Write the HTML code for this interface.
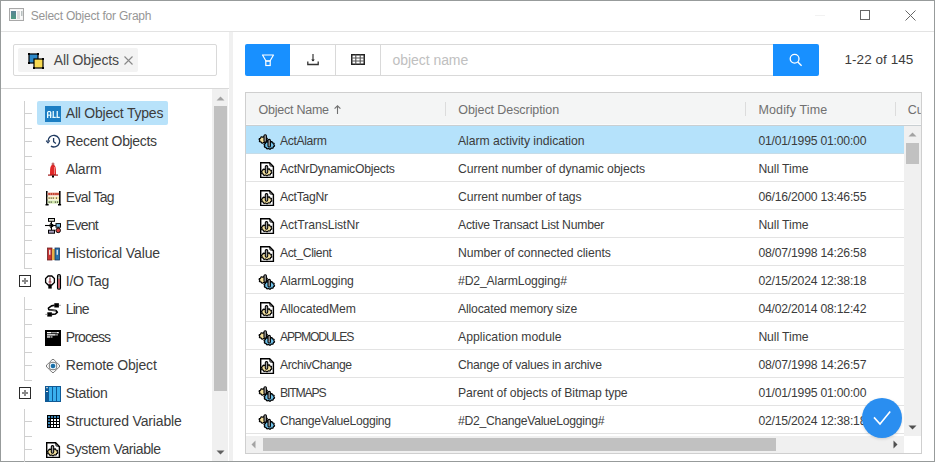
<!DOCTYPE html><html><head><meta charset="utf-8"><style>
*{margin:0;padding:0;box-sizing:border-box}
html,body{width:935px;height:462px;overflow:hidden;background:#fff;font-family:"Liberation Sans",sans-serif}
.t{position:absolute;white-space:nowrap}
.b{position:absolute}
.ic{position:absolute;overflow:visible}
</style></head><body>
<div class="b" style="left:0;top:0;width:935px;height:462px;border:1px solid #979b9b"></div>
<div class="b" style="left:1px;top:31px;width:933px;height:1px;background:#e3e3e3"></div>
<svg class="ic" style="left:9px;top:8px" width="15" height="13" viewBox="0 0 15 13">
<rect x="0.5" y="0.5" width="14" height="12" fill="#f4f4f4" stroke="#a8a8a8"/>
<rect x="2" y="2" width="11" height="9" fill="#fafafa"/>
<defs><linearGradient id="wg" x1="0" y1="0" x2="0" y2="1"><stop offset="0" stop-color="#5a8296"/><stop offset="1" stop-color="#4e9a80"/></linearGradient></defs>
<rect x="2" y="3" width="5" height="8" fill="url(#wg)"/>
<rect x="8" y="3" width="3" height="8" fill="#dcdcdc"/>
<rect x="12" y="3" width="1.5" height="5" fill="#b8c0c0"/>
</svg>
<div class="t" style="left:30.7px;top:9.34px;font-size:12px;line-height:15px;color:#969696;letter-spacing:-0.209px;">Select Object for Graph</div>
<div class="b" style="left:815px;top:15px;width:10px;height:1px;background:#f2f2f2"></div>
<div class="b" style="left:860px;top:10px;width:10px;height:10px;border:1px solid #666"></div>
<svg class="ic" style="left:905px;top:10px" width="11" height="11" viewBox="0 0 11 11"><path d="M0.5 0.5 L10.5 10.5 M10.5 0.5 L0.5 10.5" stroke="#666" stroke-width="1"/></svg>
<div class="b" style="left:13px;top:44px;width:204px;height:32px;border:1px solid #d9d9d9;border-radius:2px"></div>
<div class="b" style="left:18px;top:48px;width:120px;height:24px;background:#f3f3f3;border-radius:2px"></div>
<svg class="ic" style="left:28px;top:53px" width="16" height="16" viewBox="0 0 16 16">
<rect x="1" y="1" width="9" height="9" fill="#2c88c8" stroke="#000" stroke-width="1.2"/>
<rect x="6" y="6" width="9" height="9" fill="#f8da52" stroke="#000" stroke-width="1.2"/>
<rect x="0" y="0" width="2" height="2" fill="#000"/><rect x="9" y="0" width="2" height="2" fill="#000"/>
<rect x="0" y="9" width="2" height="2" fill="#000"/><rect x="14" y="5" width="2" height="2" fill="#000"/>
<rect x="5" y="14" width="2" height="2" fill="#000"/><rect x="14" y="14" width="2" height="2" fill="#000"/>
</svg>
<div class="t" style="left:53.8px;top:51.35px;font-size:14px;line-height:18px;color:#484848;letter-spacing:-0.170px;">All Objects</div>
<svg class="ic" style="left:124px;top:56px" width="9" height="9" viewBox="0 0 9 9"><path d="M0.5 0.5 L8.5 8.5 M8.5 0.5 L0.5 8.5" stroke="#888" stroke-width="1.1"/></svg>
<div class="b" style="left:1px;top:88px;width:228px;height:1px;background:#d9d9d9"></div>
<div class="b" style="left:229px;top:32px;width:4px;height:429px;background:#f0f0f0"></div>
<div class="b" style="left:37px;top:101px;width:131px;height:24px;background:#b8e2fa;border-radius:2px"></div>
<div class="b" style="left:24px;top:101px;width:1px;height:28px;background:#d0d0d0"></div>
<div class="b" style="left:24px;top:113px;width:8px;height:1px;background:#d0d0d0"></div>
<div class="b" style="left:24px;top:128px;width:8px;height:1px;background:#d0d0d0"></div>
<div class="t" style="left:65.8px;top:103.95px;font-size:14px;line-height:18px;color:#3c3c3c;letter-spacing:-0.220px;">All Object Types</div>
<div class="b" style="left:24px;top:129px;width:1px;height:28px;background:#d0d0d0"></div>
<div class="b" style="left:24px;top:141px;width:8px;height:1px;background:#d0d0d0"></div>
<div class="b" style="left:24px;top:156px;width:8px;height:1px;background:#d0d0d0"></div>
<div class="t" style="left:65.8px;top:131.95px;font-size:14px;line-height:18px;color:#3c3c3c;letter-spacing:-0.346px;">Recent Objects</div>
<div class="b" style="left:24px;top:157px;width:1px;height:28px;background:#d0d0d0"></div>
<div class="b" style="left:24px;top:169px;width:8px;height:1px;background:#d0d0d0"></div>
<div class="b" style="left:24px;top:184px;width:8px;height:1px;background:#d0d0d0"></div>
<div class="t" style="left:65.8px;top:159.95px;font-size:14px;line-height:18px;color:#3c3c3c;letter-spacing:-0.200px;">Alarm</div>
<div class="b" style="left:24px;top:185px;width:1px;height:28px;background:#d0d0d0"></div>
<div class="b" style="left:24px;top:197px;width:8px;height:1px;background:#d0d0d0"></div>
<div class="b" style="left:24px;top:212px;width:8px;height:1px;background:#d0d0d0"></div>
<div class="t" style="left:65.8px;top:187.95px;font-size:14px;line-height:18px;color:#3c3c3c;letter-spacing:-0.657px;">Eval Tag</div>
<div class="b" style="left:24px;top:213px;width:1px;height:28px;background:#d0d0d0"></div>
<div class="b" style="left:24px;top:225px;width:8px;height:1px;background:#d0d0d0"></div>
<div class="b" style="left:24px;top:240px;width:8px;height:1px;background:#d0d0d0"></div>
<div class="t" style="left:65.8px;top:215.95px;font-size:14px;line-height:18px;color:#3c3c3c;letter-spacing:-0.750px;">Event</div>
<div class="b" style="left:24px;top:241px;width:1px;height:28px;background:#d0d0d0"></div>
<div class="b" style="left:24px;top:253px;width:8px;height:1px;background:#d0d0d0"></div>
<div class="b" style="left:24px;top:268px;width:8px;height:1px;background:#d0d0d0"></div>
<div class="t" style="left:65.8px;top:243.95px;font-size:14px;line-height:18px;color:#3c3c3c;letter-spacing:-0.127px;">Historical Value</div>
<div class="b" style="left:19px;top:275px;width:12px;height:12px;border:1.3px solid #2a2a2a;background:#fff"></div>
<div class="b" style="left:22px;top:280px;width:6px;height:2px;background:#8a8a8a"></div>
<div class="b" style="left:24px;top:278px;width:2px;height:6px;background:#8a8a8a"></div>
<div class="t" style="left:65.8px;top:271.95px;font-size:14px;line-height:18px;color:#3c3c3c;letter-spacing:-0.233px;">I/O Tag</div>
<div class="b" style="left:24px;top:297px;width:1px;height:28px;background:#d0d0d0"></div>
<div class="b" style="left:24px;top:309px;width:8px;height:1px;background:#d0d0d0"></div>
<div class="b" style="left:24px;top:324px;width:8px;height:1px;background:#d0d0d0"></div>
<div class="t" style="left:65.8px;top:299.95px;font-size:14px;line-height:18px;color:#3c3c3c;letter-spacing:-0.933px;">Line</div>
<div class="b" style="left:24px;top:325px;width:1px;height:28px;background:#d0d0d0"></div>
<div class="b" style="left:24px;top:337px;width:8px;height:1px;background:#d0d0d0"></div>
<div class="b" style="left:24px;top:352px;width:8px;height:1px;background:#d0d0d0"></div>
<div class="t" style="left:65.8px;top:327.95px;font-size:14px;line-height:18px;color:#3c3c3c;letter-spacing:-0.883px;">Process</div>
<div class="b" style="left:24px;top:353px;width:1px;height:28px;background:#d0d0d0"></div>
<div class="b" style="left:24px;top:365px;width:8px;height:1px;background:#d0d0d0"></div>
<div class="b" style="left:24px;top:380px;width:8px;height:1px;background:#d0d0d0"></div>
<div class="t" style="left:65.8px;top:355.95px;font-size:14px;line-height:18px;color:#3c3c3c;letter-spacing:-0.200px;">Remote Object</div>
<div class="b" style="left:19px;top:387px;width:12px;height:12px;border:1.3px solid #2a2a2a;background:#fff"></div>
<div class="b" style="left:22px;top:392px;width:6px;height:2px;background:#8a8a8a"></div>
<div class="b" style="left:24px;top:390px;width:2px;height:6px;background:#8a8a8a"></div>
<div class="t" style="left:65.8px;top:383.95px;font-size:14px;line-height:18px;color:#3c3c3c;letter-spacing:-0.267px;">Station</div>
<div class="b" style="left:24px;top:409px;width:1px;height:28px;background:#d0d0d0"></div>
<div class="b" style="left:24px;top:421px;width:8px;height:1px;background:#d0d0d0"></div>
<div class="b" style="left:24px;top:436px;width:8px;height:1px;background:#d0d0d0"></div>
<div class="t" style="left:65.8px;top:411.95px;font-size:14px;line-height:18px;color:#3c3c3c;letter-spacing:-0.156px;">Structured Variable</div>
<div class="b" style="left:24px;top:437px;width:1px;height:28px;background:#d0d0d0"></div>
<div class="b" style="left:24px;top:449px;width:8px;height:1px;background:#d0d0d0"></div>
<div class="b" style="left:24px;top:464px;width:8px;height:1px;background:#d0d0d0"></div>
<div class="t" style="left:65.8px;top:439.95px;font-size:14px;line-height:18px;color:#3c3c3c;letter-spacing:-0.400px;">System Variable</div>
<svg class="ic" style="left:45px;top:106px" width="16" height="16" viewBox="0 0 16 16"><rect x="0" y="0" width="16" height="16" fill="#1c7ec3"/><g fill="#e8fbff"><rect x="2" y="6" width="1.3" height="6"/><rect x="5" y="6" width="1.3" height="6"/><rect x="2.6" y="5" width="3.1" height="1.2"/><rect x="2" y="8.6" width="4.3" height="1.1"/><rect x="7.6" y="5" width="1.3" height="7"/><rect x="7.6" y="10.8" width="3.2" height="1.2"/><rect x="11.6" y="5" width="1.3" height="7"/><rect x="11.6" y="10.8" width="3.2" height="1.2"/></g></svg>
<svg class="ic" style="left:45px;top:134px" width="16" height="16" viewBox="0 0 16 16"><path d="M3 7.2 A5.8 5.8 0 1 1 5.9 12.2" fill="none" stroke="#1f3a60" stroke-width="1.4"/><path d="M1.2 6.6 L3 8.8 L4.8 6.5" fill="none" stroke="#1f3a60" stroke-width="1.2"/><path d="M8.6 4 V7.8 L10.9 9.6" fill="none" stroke="#1f3a60" stroke-width="1.3"/></svg>
<svg class="ic" style="left:45px;top:162px" width="16" height="16" viewBox="0 0 16 16"><path d="M8 2.5 C5 3.5 5 6 5 13 H11 C11 6 11 3.5 8 2.5Z" fill="#e02828"/><rect x="3" y="12.5" width="10" height="1.2" fill="#a01818"/><rect x="7" y="13.5" width="2" height="2" fill="#000"/><circle cx="8" cy="2" r="1" fill="none" stroke="#a02020" stroke-width="0.8"/><path d="M9.5 5 V12" stroke="#fff" stroke-width="0.6" opacity="0.7"/></svg>
<svg class="ic" style="left:45px;top:190px" width="16" height="16" viewBox="0 0 16 16"><g transform="translate(0.5,1) scale(1.04,1)"><rect x="0.5" y="0" width="1.5" height="14" fill="#000"/><rect x="13" y="0" width="1.5" height="14" fill="#000"/><rect x="0" y="13" width="3" height="1.5" fill="#000"/><rect x="12" y="13" width="3" height="1.5" fill="#000"/><rect x="2" y="1.5" width="11" height="3" fill="#e9a898"/><rect x="2" y="5.5" width="11" height="3" fill="#f8e6a8"/><rect x="2" y="9.5" width="11" height="3" fill="#cfe6a8"/><g fill="#c03a28"><circle cx="3.5" cy="3" r="1"/><circle cx="5.7" cy="3" r="1"/><circle cx="7.9" cy="3" r="1"/><circle cx="10.1" cy="3" r="1"/><circle cx="12" cy="3" r="0.9"/></g><g fill="#333"><rect x="3" y="6.5" width="1" height="1.2"/><rect x="5" y="6.5" width="1" height="1.2"/><rect x="7" y="6.5" width="1" height="1.2"/><rect x="10" y="6.5" width="1" height="1.2"/><rect x="3" y="10.5" width="1" height="1.2"/><rect x="5" y="10.5" width="1" height="1.2"/><rect x="9" y="10.5" width="1" height="1.2"/><rect x="11" y="10.5" width="1" height="1.2"/></g></g></svg>
<svg class="ic" style="left:45px;top:218px" width="16" height="16" viewBox="0 0 16 16"><path d="M6.5 3.3 V12.2" stroke="#000" stroke-width="1"/><path d="M6.5 4.2 Q3.2 7.5 6.5 10.8" fill="none" stroke="#000" stroke-width="0.9"/><path d="M0 7.5 H11" stroke="#000" stroke-width="1.1"/><circle cx="6.9" cy="7.5" r="1.7" fill="#000"/><rect x="3.5" y="0.5" width="6" height="2.8" fill="#d8d8d0" stroke="#000" stroke-width="1"/><rect x="3.5" y="12.2" width="6" height="3" fill="#a8a0c0" stroke="#000" stroke-width="1"/><rect x="11" y="5.6" width="4.5" height="3.6" fill="#80c0e8" stroke="#000" stroke-width="1"/><path d="M13.2 9.2 V10" stroke="#000" stroke-width="0.8"/><circle cx="13.2" cy="12.4" r="2.3" fill="#d04040" stroke="#000" stroke-width="0.9"/></svg>
<svg class="ic" style="left:45px;top:246px" width="16" height="16" viewBox="0 0 16 16"><g transform="translate(-1.5,1)"><rect x="4" y="1" width="4.5" height="12" fill="#c83434" stroke="#6a2020" stroke-width="0.8"/><rect x="8.5" y="2" width="3" height="11" fill="#e8b048"/><rect x="11.5" y="1" width="4.5" height="12" fill="#2a72aa" stroke="#1a3a60" stroke-width="0.8"/><rect x="5.6" y="2.8" width="1.3" height="5" fill="#f0f0f0"/><rect x="13.1" y="2.8" width="1.3" height="5" fill="#e8f0f8"/></g></svg>
<svg class="ic" style="left:45px;top:274px" width="16" height="16" viewBox="0 0 16 16"><path d="M3.2 2 H6.8 L9.4 4.6 V8.4 L6.8 11 H3.2 L0.6 8.4 V4.6 Z" fill="#fff" stroke="#000" stroke-width="1.3"/><rect x="3.3" y="10.8" width="3.4" height="3.8" fill="#000"/><path d="M5 3.6 V7.6" stroke="#7a1f2a" stroke-width="1.1"/><rect x="3.6" y="7.4" width="2.8" height="1.2" fill="#8a2030"/><rect x="3.8" y="9" width="2.4" height="0.6" fill="#c06070"/><rect x="12.6" y="0.6" width="2.8" height="14.6" rx="1.3" fill="#fff" stroke="#000" stroke-width="1.3"/><rect x="13.4" y="5" width="1.2" height="9" fill="#c02030"/><path d="M13.4 2.6 H14.6 M13.4 4.2 H14.6" stroke="#000" stroke-width="0.6"/></svg>
<svg class="ic" style="left:45px;top:302px" width="16" height="16" viewBox="0 0 16 16"><path d="M9.5 3.3 L6.5 3.9 L3.4 6.1 L3.8 7.6 L11 8.6 L12.4 10.2 L10.4 12 L6.8 12.4" fill="none" stroke="#000" stroke-width="1.6" stroke-linejoin="round"/><path d="M4.5 7.9 L10.5 8.5" stroke="#888" stroke-width="0.8"/><rect x="9.3" y="1.2" width="4.6" height="4.3" fill="#000"/><rect x="13.9" y="2.8" width="2" height="1" fill="#999"/><rect x="2.3" y="10.3" width="4.6" height="4.3" fill="#000"/><rect x="0.3" y="11.9" width="2" height="1" fill="#999"/></svg>
<svg class="ic" style="left:45px;top:330px" width="16" height="16" viewBox="0 0 16 16"><rect x="0" y="0" width="16" height="16" fill="#000"/><g fill="#fff"><rect x="2" y="2" width="4.5" height="1.3"/><rect x="7.4" y="2" width="1.2" height="1.3"/><rect x="9.4" y="2" width="1.2" height="1.3"/><rect x="11.4" y="2" width="2.4" height="1.3"/><rect x="2" y="4.2" width="8.6" height="1.3"/><rect x="11.4" y="4.2" width="1.2" height="1.3"/><rect x="2" y="6.3" width="3.4" height="1.3"/><rect x="6.2" y="6.3" width="1.2" height="1.3"/></g></svg>
<svg class="ic" style="left:45px;top:358px" width="16" height="16" viewBox="0 0 16 16"><path d="M8 1.2 Q8.6 1.2 11.6 4.4 Q14.8 7.4 14.8 8 Q14.8 8.6 11.6 11.6 Q8.6 14.8 8 14.8 Q7.4 14.8 4.4 11.6 Q1.2 8.6 1.2 8 Q1.2 7.4 4.4 4.4 Q7.4 1.2 8 1.2 Z" fill="#fff" stroke="#666" stroke-width="0.9"/><rect x="4.3" y="4.3" width="7.4" height="7.4" rx="2.6" fill="#fff" stroke="#666" stroke-width="0.9"/><circle cx="8" cy="8" r="3" fill="#e2f2fa"/><circle cx="8" cy="8" r="2.3" fill="#1a6fa8"/></svg>
<svg class="ic" style="left:45px;top:386px" width="16" height="16" viewBox="0 0 16 16"><rect x="0" y="0" width="16" height="16" fill="#0f5a96"/><rect x="4" y="1" width="3" height="14" fill="#3ab0ee"/><rect x="8" y="1" width="3" height="14" fill="#3ab0ee"/><rect x="12" y="1" width="3" height="14" fill="#3ab0ee"/><rect x="1" y="1.2" width="2" height="1" fill="#ddd"/><rect x="1" y="5" width="2" height="1" fill="#eee"/></svg>
<svg class="ic" style="left:45px;top:414px" width="16" height="16" viewBox="0 0 16 16"><g transform="translate(0,1)"><rect x="2" y="0" width="13" height="13" fill="#000"/><rect x="3" y="1" width="2" height="2" fill="#3a8ab8"/><rect x="6" y="1" width="2" height="2" fill="#3a7aa8"/><rect x="9" y="1" width="2" height="2" fill="#3a8ab8"/><rect x="12" y="1" width="2" height="2" fill="#3a7aa8"/><rect x="3" y="4" width="2" height="2" fill="#3a6a98"/><rect x="3" y="7" width="2" height="2" fill="#3a8ab8"/><rect x="3" y="10" width="2" height="2" fill="#3a6a98"/><g fill="#fff"><rect x="6" y="4" width="2" height="2"/><rect x="9" y="4" width="2" height="2"/><rect x="12" y="4" width="2" height="2"/><rect x="6" y="7" width="2" height="2"/><rect x="9" y="7" width="2" height="2"/><rect x="12" y="7" width="2" height="2"/><rect x="6" y="10" width="2" height="2"/><rect x="9" y="10" width="2" height="2"/><rect x="12" y="10" width="2" height="2"/></g></g></svg>
<svg class="ic" style="left:45px;top:442px" width="16" height="16" viewBox="0 0 16 16">
<path d="M1.7 0.7 H10.6 L14.4 4.5 V15.4 H1.7 Z" fill="#fff" stroke="#000" stroke-width="1.4" stroke-linejoin="miter"/>
<path d="M10.6 0.6 L11 3.9 L14.5 4.5" fill="none" stroke="#000" stroke-width="0.9"/>
<path d="M12.84 10.65 L12.65 11.21 L11.71 11.49 L11.34 11.90 L11.37 12.67 L10.75 13.05 L9.72 12.85 L9.05 13.04 L8.47 13.71 L7.64 13.76 L6.91 13.17 L6.21 13.05 L5.23 13.37 L4.52 13.08 L4.37 12.31 L3.90 11.94 L2.89 11.78 L2.57 11.26 L3.06 10.61 L3.00 10.12 L2.36 9.55 L2.55 8.99 L3.49 8.71 L3.86 8.30 L3.83 7.53 L4.45 7.15 L5.48 7.35 L6.15 7.16 L6.73 6.49 L7.56 6.44 L8.29 7.03 L8.99 7.15 L9.97 6.83 L10.68 7.12 L10.83 7.89 L11.30 8.26 L12.31 8.42 L12.63 8.94 L12.14 9.59 L12.20 10.08 Z" fill="#f5e2a0" stroke="#000" stroke-width="1.15" stroke-linejoin="round"/>
<rect x="6.3" y="3.6" width="2.4" height="7.6" rx="1.1" fill="#a4a4a4" stroke="#000" stroke-width="1.1"/>
</svg><div class="b" style="left:212px;top:89px;width:16px;height:372px;background:#f0f0f0"></div>
<div class="b" style="left:214px;top:106px;width:13px;height:285px;background:#c1c1c1"></div>
<svg class="ic" style="left:216px;top:96px" width="9" height="5" viewBox="0 0 9 5"><path d="M0.5 4.5 L4.5 0.5 L8.5 4.5Z" fill="#a3a3a3"/></svg>
<svg class="ic" style="left:216px;top:450px" width="9" height="5" viewBox="0 0 9 5"><path d="M0.5 0.5 L4.5 4.5 L8.5 0.5Z" fill="#606060"/></svg>
<div class="b" style="left:245px;top:44px;width:45px;height:32px;background:#1890ff;border-radius:2px 0 0 2px"></div>
<svg class="ic" style="left:261px;top:54px" width="14" height="13" viewBox="0 0 14 13"><path d="M1.5 1 H12.5 L9 7 H5 Z" fill="none" stroke="#fff" stroke-width="1.2" stroke-linejoin="round"/><rect x="4.8" y="7" width="4.4" height="4.5" fill="none" stroke="#fff" stroke-width="1.2"/></svg>
<div class="b" style="left:290px;top:44px;width:484px;height:32px;border:1px solid #d9d9d9;border-left:none;border-right:none"></div>
<div class="b" style="left:335px;top:44px;width:1px;height:32px;background:#d9d9d9"></div>
<div class="b" style="left:380px;top:44px;width:1px;height:32px;background:#d9d9d9"></div>
<svg class="ic" style="left:306px;top:53px" width="14" height="14" viewBox="0 0 14 14"><path d="M7 1 V8" stroke="#444" stroke-width="1.3"/><path d="M5.2 6.5 L7 8.5 L8.8 6.5Z" fill="#222"/><path d="M1.8 8.5 V11.5 H12.2 V8.5" fill="none" stroke="#333" stroke-width="1.3"/></svg>
<svg class="ic" style="left:351px;top:54px" width="14" height="11" viewBox="0 0 14 11"><rect x="0.75" y="0.75" width="12.5" height="9.5" fill="#fff" stroke="#222" stroke-width="1.5"/><path d="M0.5 4 H13.5 M0.5 7 H13.5 M4.8 0.5 V10.5 M9.2 0.5 V10.5" stroke="#555" stroke-width="1.1"/></svg>
<div class="t" style="left:392.5px;top:50.85px;font-size:14px;line-height:18px;color:#c0c0c0;letter-spacing:-0.050px;">object name</div>
<div class="b" style="left:773px;top:44px;width:46px;height:32px;background:#1890ff;border-radius:0 2px 2px 0"></div>
<svg class="ic" style="left:789px;top:53px" width="14" height="14" viewBox="0 0 14 14"><circle cx="5.6" cy="5.8" r="4.4" fill="none" stroke="#fff" stroke-width="1.3"/><path d="M8.8 9 L12.6 12.8" stroke="#fff" stroke-width="1.4"/></svg>
<div class="t" style="left:844.5px;top:51.42px;font-size:13.5px;line-height:17px;color:#3c3c3c;letter-spacing:0.050px;">1-22 of 145</div>
<div class="b" style="left:245px;top:92px;width:677px;height:362px;border:1px solid #cfcfcf"></div>
<div class="b" style="left:246px;top:93px;width:675px;height:31px;background:#f4f5f5"></div>
<div class="b" style="left:246px;top:124px;width:675px;height:1px;background:#fafafa"></div>
<div class="b" style="left:246px;top:125px;width:675px;height:1px;background:#c9cfd2"></div>
<div class="b" style="left:445px;top:102px;width:1px;height:14px;background:#dcdcdc"></div>
<div class="b" style="left:745px;top:102px;width:1px;height:14px;background:#dcdcdc"></div>
<div class="b" style="left:895px;top:102px;width:1px;height:14px;background:#dcdcdc"></div>
<div class="t" style="left:258.5px;top:101.87px;font-size:12.5px;line-height:16px;color:#707070;letter-spacing:-0.240px;">Object Name</div>
<svg class="ic" style="left:334px;top:105px" width="7" height="9" viewBox="0 0 7 9"><path d="M3.5 0.8 V9 M0.6 3.6 L3.5 0.8 L6.4 3.6" fill="none" stroke="#707070" stroke-width="1.1"/></svg>
<div class="t" style="left:458.3px;top:101.87px;font-size:12.5px;line-height:16px;color:#707070;letter-spacing:-0.076px;">Object Description</div>
<div class="t" style="left:758.4px;top:101.87px;font-size:12.5px;line-height:16px;color:#707070;letter-spacing:0.140px;">Modify Time</div>
<div class="b" style="left:246px;top:93px;width:675px;height:32px;overflow:hidden"><div class="t" style="left:661.7px;top:8.87px;font-size:12.5px;line-height:16px;color:#707070;">Cu</div>
</div>
<div class="tb" style="position:absolute;left:246px;top:126px;width:658px;height:310px;overflow:hidden">
<div class="b" style="left:0;top:0px;width:658px;height:27px;background:#b5e2fb"></div>
<div class="b" style="left:0;top:27px;width:658px;height:1px;background:#c6dce8"></div>
<svg class="ic" style="left:13px;top:8px" width="16" height="16" viewBox="0 0 16 16">
<path d="M8.51 6.57 L8.27 7.20 L7.29 7.46 L6.84 7.89 L6.68 8.70 L5.93 9.01 L4.99 8.65 L4.29 8.70 L3.45 9.19 L2.64 9.00 L2.29 8.22 L1.75 7.87 L0.72 7.76 L0.32 7.17 L0.77 6.44 L0.70 5.89 L0.09 5.23 L0.33 4.60 L1.31 4.34 L1.76 3.91 L1.92 3.10 L2.67 2.79 L3.61 3.15 L4.31 3.10 L5.15 2.61 L5.96 2.80 L6.31 3.58 L6.85 3.93 L7.88 4.04 L8.28 4.63 L7.83 5.36 L7.90 5.91 Z" fill="#f5e09a" stroke="#000" stroke-width="1.2" stroke-linejoin="round"/>
<rect x="5" y="0.7" width="2.4" height="7.5" rx="1.1" fill="#a4a4a4" stroke="#000" stroke-width="1.1"/>
<path d="M15.57 11.60 L15.43 12.21 L14.51 12.57 L14.17 13.04 L14.26 13.84 L13.65 14.27 L12.62 14.14 L11.97 14.37 L11.43 15.07 L10.60 15.15 L9.84 14.58 L9.13 14.49 L8.17 14.83 L7.43 14.53 L7.24 13.74 L6.74 13.35 L5.72 13.20 L5.36 12.64 L5.81 11.92 L5.71 11.39 L5.03 10.80 L5.17 10.19 L6.09 9.83 L6.43 9.36 L6.34 8.56 L6.95 8.13 L7.98 8.26 L8.63 8.03 L9.17 7.33 L10.00 7.25 L10.76 7.82 L11.47 7.91 L12.43 7.57 L13.17 7.87 L13.36 8.66 L13.86 9.05 L14.88 9.20 L15.24 9.76 L14.79 10.48 L14.89 11.01 Z" fill="#70c2ea" stroke="#000" stroke-width="1.2" stroke-linejoin="round"/>
<rect x="9" y="5.4" width="2.4" height="7.6" rx="1.1" fill="#a4a4a4" stroke="#000" stroke-width="1.1"/>
</svg><div class="t" style="left:33.89999999999998px;top:8.07px;font-size:12.2px;line-height:15px;color:#3c3c3c;letter-spacing:-0.357px;">ActAlarm</div>
<div class="t" style="left:212.0px;top:8.07px;font-size:12.2px;line-height:15px;color:#3c3c3c;letter-spacing:-0.033px;">Alarm activity indication</div>
<div class="t" style="left:512.4px;top:8.07px;font-size:12.2px;line-height:15px;color:#3c3c3c;letter-spacing:-0.211px;">01/01/1995 01:00:00</div>
<div class="b" style="left:0;top:55px;width:658px;height:1px;background:#e3e3e3"></div>
<svg class="ic" style="left:13px;top:36px" width="16" height="16" viewBox="0 0 16 16">
<path d="M1.7 0.7 H10.6 L14.4 4.5 V15.4 H1.7 Z" fill="#fff" stroke="#000" stroke-width="1.4" stroke-linejoin="miter"/>
<path d="M10.6 0.6 L11 3.9 L14.5 4.5" fill="none" stroke="#000" stroke-width="0.9"/>
<path d="M12.84 10.65 L12.65 11.21 L11.71 11.49 L11.34 11.90 L11.37 12.67 L10.75 13.05 L9.72 12.85 L9.05 13.04 L8.47 13.71 L7.64 13.76 L6.91 13.17 L6.21 13.05 L5.23 13.37 L4.52 13.08 L4.37 12.31 L3.90 11.94 L2.89 11.78 L2.57 11.26 L3.06 10.61 L3.00 10.12 L2.36 9.55 L2.55 8.99 L3.49 8.71 L3.86 8.30 L3.83 7.53 L4.45 7.15 L5.48 7.35 L6.15 7.16 L6.73 6.49 L7.56 6.44 L8.29 7.03 L8.99 7.15 L9.97 6.83 L10.68 7.12 L10.83 7.89 L11.30 8.26 L12.31 8.42 L12.63 8.94 L12.14 9.59 L12.20 10.08 Z" fill="#f5e2a0" stroke="#000" stroke-width="1.15" stroke-linejoin="round"/>
<rect x="6.3" y="3.6" width="2.4" height="7.6" rx="1.1" fill="#a4a4a4" stroke="#000" stroke-width="1.1"/>
</svg><div class="t" style="left:33.89999999999998px;top:36.07px;font-size:12.2px;line-height:15px;color:#3c3c3c;letter-spacing:-0.233px;">ActNrDynamicObjects</div>
<div class="t" style="left:212.0px;top:36.07px;font-size:12.2px;line-height:15px;color:#3c3c3c;letter-spacing:-0.081px;">Current number of dynamic objects</div>
<div class="t" style="left:512.4px;top:36.07px;font-size:12.2px;line-height:15px;color:#3c3c3c;letter-spacing:-0.087px;">Null Time</div>
<div class="b" style="left:0;top:83px;width:658px;height:1px;background:#e3e3e3"></div>
<svg class="ic" style="left:13px;top:64px" width="16" height="16" viewBox="0 0 16 16">
<path d="M1.7 0.7 H10.6 L14.4 4.5 V15.4 H1.7 Z" fill="#fff" stroke="#000" stroke-width="1.4" stroke-linejoin="miter"/>
<path d="M10.6 0.6 L11 3.9 L14.5 4.5" fill="none" stroke="#000" stroke-width="0.9"/>
<path d="M12.84 10.65 L12.65 11.21 L11.71 11.49 L11.34 11.90 L11.37 12.67 L10.75 13.05 L9.72 12.85 L9.05 13.04 L8.47 13.71 L7.64 13.76 L6.91 13.17 L6.21 13.05 L5.23 13.37 L4.52 13.08 L4.37 12.31 L3.90 11.94 L2.89 11.78 L2.57 11.26 L3.06 10.61 L3.00 10.12 L2.36 9.55 L2.55 8.99 L3.49 8.71 L3.86 8.30 L3.83 7.53 L4.45 7.15 L5.48 7.35 L6.15 7.16 L6.73 6.49 L7.56 6.44 L8.29 7.03 L8.99 7.15 L9.97 6.83 L10.68 7.12 L10.83 7.89 L11.30 8.26 L12.31 8.42 L12.63 8.94 L12.14 9.59 L12.20 10.08 Z" fill="#f5e2a0" stroke="#000" stroke-width="1.15" stroke-linejoin="round"/>
<rect x="6.3" y="3.6" width="2.4" height="7.6" rx="1.1" fill="#a4a4a4" stroke="#000" stroke-width="1.1"/>
</svg><div class="t" style="left:33.89999999999998px;top:64.07px;font-size:12.2px;line-height:15px;color:#3c3c3c;letter-spacing:-0.286px;">ActTagNr</div>
<div class="t" style="left:212.0px;top:64.07px;font-size:12.2px;line-height:15px;color:#3c3c3c;letter-spacing:-0.081px;">Current number of tags</div>
<div class="t" style="left:512.4px;top:64.07px;font-size:12.2px;line-height:15px;color:#3c3c3c;letter-spacing:-0.211px;">06/16/2000 13:46:55</div>
<div class="b" style="left:0;top:111px;width:658px;height:1px;background:#e3e3e3"></div>
<svg class="ic" style="left:13px;top:92px" width="16" height="16" viewBox="0 0 16 16">
<path d="M1.7 0.7 H10.6 L14.4 4.5 V15.4 H1.7 Z" fill="#fff" stroke="#000" stroke-width="1.4" stroke-linejoin="miter"/>
<path d="M10.6 0.6 L11 3.9 L14.5 4.5" fill="none" stroke="#000" stroke-width="0.9"/>
<path d="M12.84 10.65 L12.65 11.21 L11.71 11.49 L11.34 11.90 L11.37 12.67 L10.75 13.05 L9.72 12.85 L9.05 13.04 L8.47 13.71 L7.64 13.76 L6.91 13.17 L6.21 13.05 L5.23 13.37 L4.52 13.08 L4.37 12.31 L3.90 11.94 L2.89 11.78 L2.57 11.26 L3.06 10.61 L3.00 10.12 L2.36 9.55 L2.55 8.99 L3.49 8.71 L3.86 8.30 L3.83 7.53 L4.45 7.15 L5.48 7.35 L6.15 7.16 L6.73 6.49 L7.56 6.44 L8.29 7.03 L8.99 7.15 L9.97 6.83 L10.68 7.12 L10.83 7.89 L11.30 8.26 L12.31 8.42 L12.63 8.94 L12.14 9.59 L12.20 10.08 Z" fill="#f5e2a0" stroke="#000" stroke-width="1.15" stroke-linejoin="round"/>
<rect x="6.3" y="3.6" width="2.4" height="7.6" rx="1.1" fill="#a4a4a4" stroke="#000" stroke-width="1.1"/>
</svg><div class="t" style="left:33.89999999999998px;top:92.07px;font-size:12.2px;line-height:15px;color:#3c3c3c;letter-spacing:-0.062px;">ActTransListNr</div>
<div class="t" style="left:212.0px;top:92.07px;font-size:12.2px;line-height:15px;color:#3c3c3c;letter-spacing:-0.235px;">Active Transact List Number</div>
<div class="t" style="left:512.4px;top:92.07px;font-size:12.2px;line-height:15px;color:#3c3c3c;letter-spacing:-0.087px;">Null Time</div>
<div class="b" style="left:0;top:139px;width:658px;height:1px;background:#e3e3e3"></div>
<svg class="ic" style="left:13px;top:120px" width="16" height="16" viewBox="0 0 16 16">
<path d="M1.7 0.7 H10.6 L14.4 4.5 V15.4 H1.7 Z" fill="#fff" stroke="#000" stroke-width="1.4" stroke-linejoin="miter"/>
<path d="M10.6 0.6 L11 3.9 L14.5 4.5" fill="none" stroke="#000" stroke-width="0.9"/>
<path d="M12.84 10.65 L12.65 11.21 L11.71 11.49 L11.34 11.90 L11.37 12.67 L10.75 13.05 L9.72 12.85 L9.05 13.04 L8.47 13.71 L7.64 13.76 L6.91 13.17 L6.21 13.05 L5.23 13.37 L4.52 13.08 L4.37 12.31 L3.90 11.94 L2.89 11.78 L2.57 11.26 L3.06 10.61 L3.00 10.12 L2.36 9.55 L2.55 8.99 L3.49 8.71 L3.86 8.30 L3.83 7.53 L4.45 7.15 L5.48 7.35 L6.15 7.16 L6.73 6.49 L7.56 6.44 L8.29 7.03 L8.99 7.15 L9.97 6.83 L10.68 7.12 L10.83 7.89 L11.30 8.26 L12.31 8.42 L12.63 8.94 L12.14 9.59 L12.20 10.08 Z" fill="#f5e2a0" stroke="#000" stroke-width="1.15" stroke-linejoin="round"/>
<rect x="6.3" y="3.6" width="2.4" height="7.6" rx="1.1" fill="#a4a4a4" stroke="#000" stroke-width="1.1"/>
</svg><div class="t" style="left:33.89999999999998px;top:120.07px;font-size:12.2px;line-height:15px;color:#3c3c3c;letter-spacing:-0.389px;">Act_Client</div>
<div class="t" style="left:212.0px;top:120.07px;font-size:12.2px;line-height:15px;color:#3c3c3c;letter-spacing:-0.062px;">Number of connected clients</div>
<div class="t" style="left:512.4px;top:120.07px;font-size:12.2px;line-height:15px;color:#3c3c3c;letter-spacing:-0.211px;">08/07/1998 14:26:58</div>
<div class="b" style="left:0;top:167px;width:658px;height:1px;background:#e3e3e3"></div>
<svg class="ic" style="left:13px;top:148px" width="16" height="16" viewBox="0 0 16 16">
<path d="M8.51 6.57 L8.27 7.20 L7.29 7.46 L6.84 7.89 L6.68 8.70 L5.93 9.01 L4.99 8.65 L4.29 8.70 L3.45 9.19 L2.64 9.00 L2.29 8.22 L1.75 7.87 L0.72 7.76 L0.32 7.17 L0.77 6.44 L0.70 5.89 L0.09 5.23 L0.33 4.60 L1.31 4.34 L1.76 3.91 L1.92 3.10 L2.67 2.79 L3.61 3.15 L4.31 3.10 L5.15 2.61 L5.96 2.80 L6.31 3.58 L6.85 3.93 L7.88 4.04 L8.28 4.63 L7.83 5.36 L7.90 5.91 Z" fill="#f5e09a" stroke="#000" stroke-width="1.2" stroke-linejoin="round"/>
<rect x="5" y="0.7" width="2.4" height="7.5" rx="1.1" fill="#a4a4a4" stroke="#000" stroke-width="1.1"/>
<path d="M15.57 11.60 L15.43 12.21 L14.51 12.57 L14.17 13.04 L14.26 13.84 L13.65 14.27 L12.62 14.14 L11.97 14.37 L11.43 15.07 L10.60 15.15 L9.84 14.58 L9.13 14.49 L8.17 14.83 L7.43 14.53 L7.24 13.74 L6.74 13.35 L5.72 13.20 L5.36 12.64 L5.81 11.92 L5.71 11.39 L5.03 10.80 L5.17 10.19 L6.09 9.83 L6.43 9.36 L6.34 8.56 L6.95 8.13 L7.98 8.26 L8.63 8.03 L9.17 7.33 L10.00 7.25 L10.76 7.82 L11.47 7.91 L12.43 7.57 L13.17 7.87 L13.36 8.66 L13.86 9.05 L14.88 9.20 L15.24 9.76 L14.79 10.48 L14.89 11.01 Z" fill="#70c2ea" stroke="#000" stroke-width="1.2" stroke-linejoin="round"/>
<rect x="9" y="5.4" width="2.4" height="7.6" rx="1.1" fill="#a4a4a4" stroke="#000" stroke-width="1.1"/>
</svg><div class="t" style="left:33.89999999999998px;top:148.07px;font-size:12.2px;line-height:15px;color:#3c3c3c;letter-spacing:-0.109px;">AlarmLogging</div>
<div class="t" style="left:212.0px;top:148.07px;font-size:12.2px;line-height:15px;color:#3c3c3c;letter-spacing:-0.131px;">#D2_AlarmLogging#</div>
<div class="t" style="left:512.4px;top:148.07px;font-size:12.2px;line-height:15px;color:#3c3c3c;letter-spacing:-0.211px;">02/15/2024 12:38:18</div>
<div class="b" style="left:0;top:195px;width:658px;height:1px;background:#e3e3e3"></div>
<svg class="ic" style="left:13px;top:176px" width="16" height="16" viewBox="0 0 16 16">
<path d="M1.7 0.7 H10.6 L14.4 4.5 V15.4 H1.7 Z" fill="#fff" stroke="#000" stroke-width="1.4" stroke-linejoin="miter"/>
<path d="M10.6 0.6 L11 3.9 L14.5 4.5" fill="none" stroke="#000" stroke-width="0.9"/>
<path d="M12.84 10.65 L12.65 11.21 L11.71 11.49 L11.34 11.90 L11.37 12.67 L10.75 13.05 L9.72 12.85 L9.05 13.04 L8.47 13.71 L7.64 13.76 L6.91 13.17 L6.21 13.05 L5.23 13.37 L4.52 13.08 L4.37 12.31 L3.90 11.94 L2.89 11.78 L2.57 11.26 L3.06 10.61 L3.00 10.12 L2.36 9.55 L2.55 8.99 L3.49 8.71 L3.86 8.30 L3.83 7.53 L4.45 7.15 L5.48 7.35 L6.15 7.16 L6.73 6.49 L7.56 6.44 L8.29 7.03 L8.99 7.15 L9.97 6.83 L10.68 7.12 L10.83 7.89 L11.30 8.26 L12.31 8.42 L12.63 8.94 L12.14 9.59 L12.20 10.08 Z" fill="#f5e2a0" stroke="#000" stroke-width="1.15" stroke-linejoin="round"/>
<rect x="6.3" y="3.6" width="2.4" height="7.6" rx="1.1" fill="#a4a4a4" stroke="#000" stroke-width="1.1"/>
</svg><div class="t" style="left:33.89999999999998px;top:176.07px;font-size:12.2px;line-height:15px;color:#3c3c3c;letter-spacing:-0.118px;">AllocatedMem</div>
<div class="t" style="left:212.0px;top:176.07px;font-size:12.2px;line-height:15px;color:#3c3c3c;letter-spacing:-0.165px;">Allocated memory size</div>
<div class="t" style="left:512.4px;top:176.07px;font-size:12.2px;line-height:15px;color:#3c3c3c;letter-spacing:-0.211px;">04/02/2014 08:12:42</div>
<div class="b" style="left:0;top:223px;width:658px;height:1px;background:#e3e3e3"></div>
<svg class="ic" style="left:13px;top:204px" width="16" height="16" viewBox="0 0 16 16">
<path d="M8.51 6.57 L8.27 7.20 L7.29 7.46 L6.84 7.89 L6.68 8.70 L5.93 9.01 L4.99 8.65 L4.29 8.70 L3.45 9.19 L2.64 9.00 L2.29 8.22 L1.75 7.87 L0.72 7.76 L0.32 7.17 L0.77 6.44 L0.70 5.89 L0.09 5.23 L0.33 4.60 L1.31 4.34 L1.76 3.91 L1.92 3.10 L2.67 2.79 L3.61 3.15 L4.31 3.10 L5.15 2.61 L5.96 2.80 L6.31 3.58 L6.85 3.93 L7.88 4.04 L8.28 4.63 L7.83 5.36 L7.90 5.91 Z" fill="#f5e09a" stroke="#000" stroke-width="1.2" stroke-linejoin="round"/>
<rect x="5" y="0.7" width="2.4" height="7.5" rx="1.1" fill="#a4a4a4" stroke="#000" stroke-width="1.1"/>
<path d="M15.57 11.60 L15.43 12.21 L14.51 12.57 L14.17 13.04 L14.26 13.84 L13.65 14.27 L12.62 14.14 L11.97 14.37 L11.43 15.07 L10.60 15.15 L9.84 14.58 L9.13 14.49 L8.17 14.83 L7.43 14.53 L7.24 13.74 L6.74 13.35 L5.72 13.20 L5.36 12.64 L5.81 11.92 L5.71 11.39 L5.03 10.80 L5.17 10.19 L6.09 9.83 L6.43 9.36 L6.34 8.56 L6.95 8.13 L7.98 8.26 L8.63 8.03 L9.17 7.33 L10.00 7.25 L10.76 7.82 L11.47 7.91 L12.43 7.57 L13.17 7.87 L13.36 8.66 L13.86 9.05 L14.88 9.20 L15.24 9.76 L14.79 10.48 L14.89 11.01 Z" fill="#70c2ea" stroke="#000" stroke-width="1.2" stroke-linejoin="round"/>
<rect x="9" y="5.4" width="2.4" height="7.6" rx="1.1" fill="#a4a4a4" stroke="#000" stroke-width="1.1"/>
</svg><div class="t" style="left:33.89999999999998px;top:204.07px;font-size:12.2px;line-height:15px;color:#3c3c3c;letter-spacing:-1.133px;">APPMODULES</div>
<div class="t" style="left:212.0px;top:204.07px;font-size:12.2px;line-height:15px;color:#3c3c3c;letter-spacing:0.029px;">Application module</div>
<div class="t" style="left:512.4px;top:204.07px;font-size:12.2px;line-height:15px;color:#3c3c3c;letter-spacing:-0.087px;">Null Time</div>
<div class="b" style="left:0;top:251px;width:658px;height:1px;background:#e3e3e3"></div>
<svg class="ic" style="left:13px;top:232px" width="16" height="16" viewBox="0 0 16 16">
<path d="M1.7 0.7 H10.6 L14.4 4.5 V15.4 H1.7 Z" fill="#fff" stroke="#000" stroke-width="1.4" stroke-linejoin="miter"/>
<path d="M10.6 0.6 L11 3.9 L14.5 4.5" fill="none" stroke="#000" stroke-width="0.9"/>
<path d="M12.84 10.65 L12.65 11.21 L11.71 11.49 L11.34 11.90 L11.37 12.67 L10.75 13.05 L9.72 12.85 L9.05 13.04 L8.47 13.71 L7.64 13.76 L6.91 13.17 L6.21 13.05 L5.23 13.37 L4.52 13.08 L4.37 12.31 L3.90 11.94 L2.89 11.78 L2.57 11.26 L3.06 10.61 L3.00 10.12 L2.36 9.55 L2.55 8.99 L3.49 8.71 L3.86 8.30 L3.83 7.53 L4.45 7.15 L5.48 7.35 L6.15 7.16 L6.73 6.49 L7.56 6.44 L8.29 7.03 L8.99 7.15 L9.97 6.83 L10.68 7.12 L10.83 7.89 L11.30 8.26 L12.31 8.42 L12.63 8.94 L12.14 9.59 L12.20 10.08 Z" fill="#f5e2a0" stroke="#000" stroke-width="1.15" stroke-linejoin="round"/>
<rect x="6.3" y="3.6" width="2.4" height="7.6" rx="1.1" fill="#a4a4a4" stroke="#000" stroke-width="1.1"/>
</svg><div class="t" style="left:33.89999999999998px;top:232.07px;font-size:12.2px;line-height:15px;color:#3c3c3c;letter-spacing:-0.391px;">ArchivChange</div>
<div class="t" style="left:212.0px;top:232.07px;font-size:12.2px;line-height:15px;color:#3c3c3c;letter-spacing:-0.250px;">Change of values in archive</div>
<div class="t" style="left:512.4px;top:232.07px;font-size:12.2px;line-height:15px;color:#3c3c3c;letter-spacing:-0.211px;">08/07/1998 14:26:57</div>
<div class="b" style="left:0;top:279px;width:658px;height:1px;background:#e3e3e3"></div>
<svg class="ic" style="left:13px;top:260px" width="16" height="16" viewBox="0 0 16 16">
<path d="M8.51 6.57 L8.27 7.20 L7.29 7.46 L6.84 7.89 L6.68 8.70 L5.93 9.01 L4.99 8.65 L4.29 8.70 L3.45 9.19 L2.64 9.00 L2.29 8.22 L1.75 7.87 L0.72 7.76 L0.32 7.17 L0.77 6.44 L0.70 5.89 L0.09 5.23 L0.33 4.60 L1.31 4.34 L1.76 3.91 L1.92 3.10 L2.67 2.79 L3.61 3.15 L4.31 3.10 L5.15 2.61 L5.96 2.80 L6.31 3.58 L6.85 3.93 L7.88 4.04 L8.28 4.63 L7.83 5.36 L7.90 5.91 Z" fill="#f5e09a" stroke="#000" stroke-width="1.2" stroke-linejoin="round"/>
<rect x="5" y="0.7" width="2.4" height="7.5" rx="1.1" fill="#a4a4a4" stroke="#000" stroke-width="1.1"/>
<path d="M15.57 11.60 L15.43 12.21 L14.51 12.57 L14.17 13.04 L14.26 13.84 L13.65 14.27 L12.62 14.14 L11.97 14.37 L11.43 15.07 L10.60 15.15 L9.84 14.58 L9.13 14.49 L8.17 14.83 L7.43 14.53 L7.24 13.74 L6.74 13.35 L5.72 13.20 L5.36 12.64 L5.81 11.92 L5.71 11.39 L5.03 10.80 L5.17 10.19 L6.09 9.83 L6.43 9.36 L6.34 8.56 L6.95 8.13 L7.98 8.26 L8.63 8.03 L9.17 7.33 L10.00 7.25 L10.76 7.82 L11.47 7.91 L12.43 7.57 L13.17 7.87 L13.36 8.66 L13.86 9.05 L14.88 9.20 L15.24 9.76 L14.79 10.48 L14.89 11.01 Z" fill="#70c2ea" stroke="#000" stroke-width="1.2" stroke-linejoin="round"/>
<rect x="9" y="5.4" width="2.4" height="7.6" rx="1.1" fill="#a4a4a4" stroke="#000" stroke-width="1.1"/>
</svg><div class="t" style="left:33.89999999999998px;top:260.07px;font-size:12.2px;line-height:15px;color:#3c3c3c;letter-spacing:-1.117px;">BITMAPS</div>
<div class="t" style="left:212.0px;top:260.07px;font-size:12.2px;line-height:15px;color:#3c3c3c;letter-spacing:-0.100px;">Parent of objects of Bitmap type</div>
<div class="t" style="left:512.4px;top:260.07px;font-size:12.2px;line-height:15px;color:#3c3c3c;letter-spacing:-0.211px;">01/01/1995 01:00:00</div>
<div class="b" style="left:0;top:307px;width:658px;height:1px;background:#e3e3e3"></div>
<svg class="ic" style="left:13px;top:288px" width="16" height="16" viewBox="0 0 16 16">
<path d="M8.51 6.57 L8.27 7.20 L7.29 7.46 L6.84 7.89 L6.68 8.70 L5.93 9.01 L4.99 8.65 L4.29 8.70 L3.45 9.19 L2.64 9.00 L2.29 8.22 L1.75 7.87 L0.72 7.76 L0.32 7.17 L0.77 6.44 L0.70 5.89 L0.09 5.23 L0.33 4.60 L1.31 4.34 L1.76 3.91 L1.92 3.10 L2.67 2.79 L3.61 3.15 L4.31 3.10 L5.15 2.61 L5.96 2.80 L6.31 3.58 L6.85 3.93 L7.88 4.04 L8.28 4.63 L7.83 5.36 L7.90 5.91 Z" fill="#f5e09a" stroke="#000" stroke-width="1.2" stroke-linejoin="round"/>
<rect x="5" y="0.7" width="2.4" height="7.5" rx="1.1" fill="#a4a4a4" stroke="#000" stroke-width="1.1"/>
<path d="M15.57 11.60 L15.43 12.21 L14.51 12.57 L14.17 13.04 L14.26 13.84 L13.65 14.27 L12.62 14.14 L11.97 14.37 L11.43 15.07 L10.60 15.15 L9.84 14.58 L9.13 14.49 L8.17 14.83 L7.43 14.53 L7.24 13.74 L6.74 13.35 L5.72 13.20 L5.36 12.64 L5.81 11.92 L5.71 11.39 L5.03 10.80 L5.17 10.19 L6.09 9.83 L6.43 9.36 L6.34 8.56 L6.95 8.13 L7.98 8.26 L8.63 8.03 L9.17 7.33 L10.00 7.25 L10.76 7.82 L11.47 7.91 L12.43 7.57 L13.17 7.87 L13.36 8.66 L13.86 9.05 L14.88 9.20 L15.24 9.76 L14.79 10.48 L14.89 11.01 Z" fill="#70c2ea" stroke="#000" stroke-width="1.2" stroke-linejoin="round"/>
<rect x="9" y="5.4" width="2.4" height="7.6" rx="1.1" fill="#a4a4a4" stroke="#000" stroke-width="1.1"/>
</svg><div class="t" style="left:33.89999999999998px;top:288.07px;font-size:12.2px;line-height:15px;color:#3c3c3c;letter-spacing:-0.300px;">ChangeValueLogging</div>
<div class="t" style="left:212.0px;top:288.07px;font-size:12.2px;line-height:15px;color:#3c3c3c;letter-spacing:-0.264px;">#D2_ChangeValueLogging#</div>
<div class="t" style="left:512.4px;top:288.07px;font-size:12.2px;line-height:15px;color:#3c3c3c;letter-spacing:-0.211px;">02/15/2024 12:38:18</div>
</div>
<div class="b" style="left:904px;top:126px;width:17px;height:310px;background:#f0f0f0"></div>
<div class="b" style="left:906px;top:143px;width:13px;height:21px;background:#c1c1c1"></div>
<svg class="ic" style="left:908px;top:132px" width="9" height="5" viewBox="0 0 9 5"><path d="M0.5 4.5 L4.5 0.5 L8.5 4.5Z" fill="#a3a3a3"/></svg>
<svg class="ic" style="left:908px;top:425px" width="9" height="5" viewBox="0 0 9 5"><path d="M0.5 0.5 L4.5 4.5 L8.5 0.5Z" fill="#505050"/></svg>
<div class="b" style="left:246px;top:436px;width:658px;height:17px;background:#f0f0f0"></div>
<div class="b" style="left:263px;top:438px;width:513px;height:13px;background:#c1c1c1"></div>
<svg class="ic" style="left:251px;top:440px" width="5" height="9" viewBox="0 0 5 9"><path d="M4.5 0.5 L0.5 4.5 L4.5 8.5Z" fill="#a3a3a3"/></svg>
<svg class="ic" style="left:893px;top:440px" width="5" height="9" viewBox="0 0 5 9"><path d="M0.5 0.5 L4.5 4.5 L0.5 8.5Z" fill="#505050"/></svg>
<div class="b" style="left:862px;top:398px;width:40px;height:40px;border-radius:50%;background:#2a8ef0;box-shadow:0 1px 3px rgba(0,0,0,0.15)"></div>
<svg class="ic" style="left:872px;top:409px" width="20" height="17" viewBox="0 0 20 17"><path d="M2 8.4 L8 15 L18.2 2.4" fill="none" stroke="#fff" stroke-width="1.6"/></svg>
</body></html>
